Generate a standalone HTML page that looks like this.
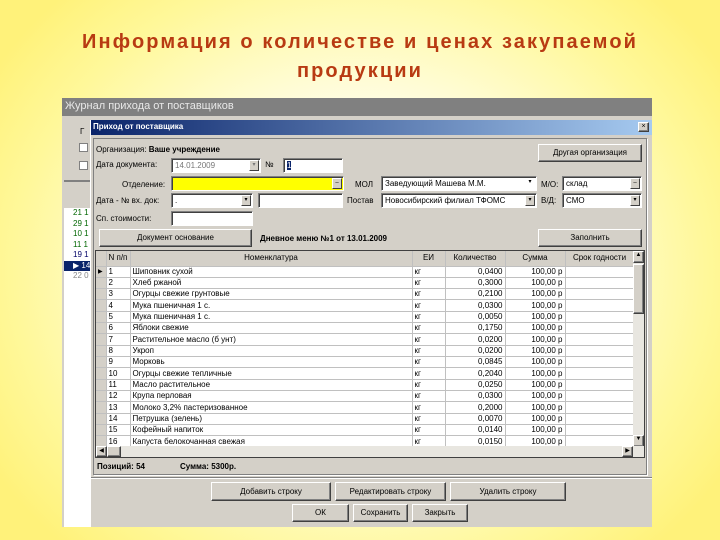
<!DOCTYPE html><html><head><meta charset="utf-8"><style>
*{margin:0;padding:0;box-sizing:border-box}
body{width:720px;height:540px;overflow:hidden;position:relative;font-family:"Liberation Sans",sans-serif;background:radial-gradient(ellipse 60% 70% at 50% 50%,#fff 0%,#fffde0 45%,#fff89a 80%,#fff27a 100%)}
.a{position:absolute}
h1{position:absolute;left:0;width:720px;top:28px;text-align:center;font-size:20px;font-weight:bold;color:#b83a12;line-height:29px;letter-spacing:2.1px}
.btn{position:absolute;background:#d4d0c8;border:1px solid;border-color:#fff #404040 #404040 #fff;box-shadow:inset -1px -1px #808080;font-size:8px;text-align:center;color:#000}
.inp{position:absolute;background:#fff;border:1px solid;border-color:#808080 #fff #fff #808080;box-shadow:inset 1px 1px #404040;font-size:8px;padding-left:3px;line-height:13px}
.lbl{position:absolute;font-size:8px;color:#000}
.dd{position:absolute;right:1px;top:1px;width:10px;bottom:1px;background:#d4d0c8;border:1px solid;border-color:#fff #404040 #404040 #fff;font-size:6px;text-align:center;line-height:9px}
table{border-collapse:collapse;font-size:8px}
td{height:11.33px;border-right:1px solid #c0c0c0;border-bottom:1px solid #c0c0c0;padding:0 2px;white-space:nowrap;overflow:hidden;line-height:10px}
</style></head><body>
<h1>Информация о количестве и ценах закупаемой<br>продукции</h1>
<div class="a" style="left:62px;top:98px;width:590px;height:429px;background:#d4d0c8"></div>
<div class="a" style="left:62px;top:98px;width:590px;height:18px;background:#808080;color:#e8e8e8;font-size:11px;padding:2px 3px">Журнал прихода от поставщиков</div>
<div class="lbl" style="left:80px;top:127px">Г</div>
<div class="a" style="left:79px;top:143px;width:9px;height:9px;background:#fff;border:1px solid #808080"></div>
<div class="a" style="left:79px;top:161px;width:9px;height:9px;background:#fff;border:1px solid #808080"></div>
<div class="a" style="left:64px;top:180px;width:26px;height:347px;background:#fff;border-top:2px solid #808080"></div>
<div class="a" style="left:64px;top:182px;width:26px;height:26px;background:#d4d0c8"></div>
<div class="a" style="left:64px;top:208px;font-size:8px;line-height:10.5px;color:#060">
<div style="padding-left:9px">21 1</div><div style="padding-left:9px">29 1</div><div style="padding-left:9px">10 1</div><div style="padding-left:9px">11 1</div><div style="padding-left:9px;color:#006">19 1</div><div style="padding-left:9px;background:#0a246a;color:#fff;margin-left:0">▶ 14 0</div><div style="padding-left:9px;color:#888">22 0</div></div>
<div class="a" style="left:90px;top:120px;width:562px;height:407px;background:#d4d0c8;border-left:1px solid #fff"></div>
<div class="a" style="left:91px;top:120px;width:561px;height:15px;background:linear-gradient(90deg,#0a246a,#a6caf0);color:#fff;font-size:8px;font-weight:bold;padding:2px 2px">Приход от поставщика</div>
<div class="btn" style="left:638px;top:122px;width:11px;height:10px;font-size:7px;line-height:8px">×</div>
<div class="a" style="left:93px;top:138px;width:554px;height:337px;border:1px solid #808080;box-shadow:1px 1px #fff"></div>
<div class="lbl" style="left:96px;top:145px">Организация: <b>Ваше учреждение</b></div>
<div class="btn" style="left:538px;top:144px;width:104px;height:18px;line-height:16px">Другая организация</div>
<div class="lbl" style="left:96px;top:160px">Дата документа:</div>
<div class="inp" style="left:171px;top:158px;width:90px;height:15px;color:#777">14.01.2009<div class="dd">▾</div></div>
<div class="lbl" style="left:265px;top:160px">№</div>
<div class="inp" style="left:283px;top:158px;width:60px;height:15px"><span style="background:#0a246a;color:#fff">1</span></div>
<div class="lbl" style="left:122px;top:180px">Отделение:</div>
<div class="inp" style="left:171px;top:176px;width:173px;height:15px;background:#ffff00"><div class="dd">–</div></div>
<div class="lbl" style="left:355px;top:180px">МОЛ</div>
<div class="inp" style="left:381px;top:176px;width:156px;height:15px">Заведующий Машева М.М.<div class="dd" style="background:#fff;border:0">▾</div></div>
<div class="lbl" style="left:541px;top:180px">М/О:</div>
<div class="inp" style="left:562px;top:176px;width:80px;height:15px">склад<div class="dd">–</div></div>
<div class="lbl" style="left:96px;top:196px">Дата - № вх. док:</div>
<div class="inp" style="left:171px;top:193px;width:82px;height:15px">.<div class="dd">▾</div></div>
<div class="inp" style="left:258px;top:193px;width:85px;height:15px"></div>
<div class="lbl" style="left:347px;top:196px">Постав</div>
<div class="inp" style="left:381px;top:193px;width:156px;height:15px">Новосибирский филиал ТФОМС<div class="dd">▾</div></div>
<div class="lbl" style="left:541px;top:196px">В/Д:</div>
<div class="inp" style="left:562px;top:193px;width:80px;height:15px">СМО<div class="dd">▾</div></div>
<div class="lbl" style="left:96px;top:214px">Сп. стоимости:</div>
<div class="inp" style="left:171px;top:211px;width:82px;height:15px"></div>
<div class="btn" style="left:99px;top:229px;width:153px;height:18px;line-height:16px">Документ основание</div>
<div class="lbl" style="left:260px;top:234px;font-weight:bold">Дневное меню №1 от 13.01.2009</div>
<div class="btn" style="left:538px;top:229px;width:104px;height:18px;line-height:16px">Заполнить</div>
<div class="a" style="left:95px;top:250px;width:550px;height:208px;background:#fff;border:1px solid #404040;overflow:hidden">
<table style="width:538px;table-layout:fixed">
<colgroup><col style="width:10px"><col style="width:24px"><col style="width:282px"><col style="width:33px"><col style="width:60px"><col style="width:60px"><col style="width:69px"></colgroup>
<tr style="background:#d4d0c8;height:15px"><td></td><td>N п/п</td><td style="text-align:center">Номенклатура</td><td style="text-align:center">ЕИ</td><td style="text-align:center">Количество</td><td style="text-align:center">Сумма</td><td style="text-align:center">Срок годности</td></tr>
<tbody id="b"></tbody></table>
<div class="a" style="right:0;top:0;width:11px;height:196px;background:#e8e6e0"><div class="btn" style="left:0;top:0;width:11px;height:12px;font-size:6px">▲</div><div class="btn" style="left:0;top:13px;width:11px;height:50px"></div><div class="btn" style="left:0;bottom:0;width:11px;height:12px;font-size:6px">▼</div></div>
<div class="a" style="left:0;bottom:0;width:548px;height:11px;background:#e8e6e0"><div class="btn" style="left:0;top:0;width:11px;height:11px;font-size:6px">◀</div><div class="btn" style="left:11px;top:0;width:14px;height:11px"></div><div class="btn" style="left:526px;top:0;width:11px;height:11px;font-size:6px">▶</div></div>
</div>
<div class="lbl" style="left:97px;top:462px;font-weight:bold">Позиций: 54</div>
<div class="lbl" style="left:180px;top:462px;font-weight:bold">Сумма: 5300р.</div>
<div class="a" style="left:91px;top:477px;width:561px;height:1px;background:#808080;box-shadow:0 1px #fff"></div>
<div class="btn" style="left:211px;top:482px;width:120px;height:19px;line-height:17px">Добавить строку</div>
<div class="btn" style="left:335px;top:482px;width:111px;height:19px;line-height:17px">Редактировать строку</div>
<div class="btn" style="left:450px;top:482px;width:116px;height:19px;line-height:17px">Удалить строку</div>
<div class="btn" style="left:292px;top:504px;width:57px;height:18px;line-height:16px">ОК</div>
<div class="btn" style="left:353px;top:504px;width:55px;height:18px;line-height:16px">Сохранить</div>
<div class="btn" style="left:412px;top:504px;width:56px;height:18px;line-height:16px">Закрыть</div>
<script>
var r=[["Шиповник сухой","кг","0,0400","100,00 р"],["Хлеб ржаной","кг","0,3000","100,00 р"],["Огурцы свежие грунтовые","кг","0,2100","100,00 р"],["Мука пшеничная 1 с.","кг","0,0300","100,00 р"],["Мука пшеничная 1 с.","кг","0,0050","100,00 р"],["Яблоки свежие","кг","0,1750","100,00 р"],["Растительное масло (б унт)","кг","0,0200","100,00 р"],["Укроп","кг","0,0200","100,00 р"],["Морковь","кг","0,0845","100,00 р"],["Огурцы свежие тепличные","кг","0,2040","100,00 р"],["Масло растительное","кг","0,0250","100,00 р"],["Крупа перловая","кг","0,0300","100,00 р"],["Молоко 3,2% пастеризованное","кг","0,2000","100,00 р"],["Петрушка (зелень)","кг","0,0070","100,00 р"],["Кофейный напиток","кг","0,0140","100,00 р"],["Капуста белокочанная свежая","кг","0,0150","100,00 р"]];
var h="";r.forEach(function(x,i){h+='<tr><td style="background:#d4d0c8;font-size:6px">'+(i==0?'▶':'')+'</td><td>'+(i+1)+'</td><td>'+x[0]+'</td><td>'+x[1]+'</td><td style="text-align:right">'+x[2]+'</td><td style="text-align:right">'+x[3]+'</td><td></td></tr>'});document.getElementById('b').innerHTML=h;
</script>
</body></html>
